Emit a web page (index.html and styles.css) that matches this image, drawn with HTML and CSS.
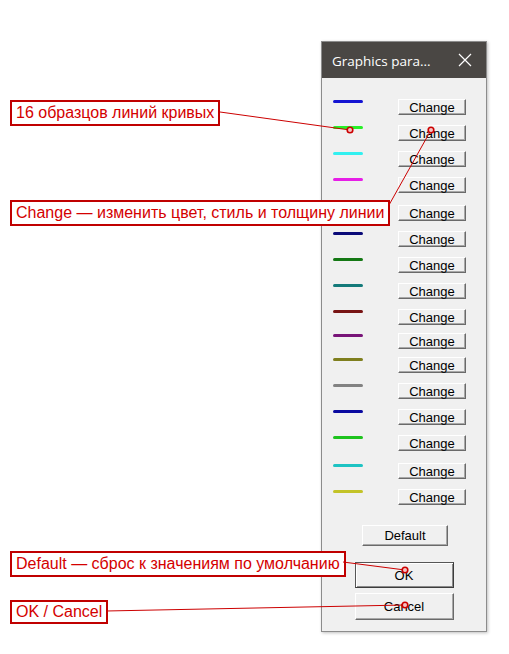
FILE: index.html
```html
<!DOCTYPE html>
<html lang="ru">

<head>
    <meta charset="UTF-8">
    <meta name="viewport" content="width=device-width, initial-scale=1.0">
    <title>Graphics parameters</title>

    <link rel="stylesheet" href="styles.css">
</head>

<body>

    <div class="dialog">
        <div class="titlebar">
            <span class="title">Graphics para...</span>
            <svg class="close" width="14" height="14" viewBox="0 0 14 14">
                <path d="M1 1 L13 13 M13 1 L1 13" stroke="#fff" stroke-width="1.2" fill="none" />
            </svg>
        </div>

        <div class="content">
            <ul class="samples">
                <li class="row"><span class="sample c1"></span><button class="btn change">Change</button></li>
                <li class="row"><span class="sample c2"></span><button class="btn change">Change</button></li>
                <li class="row"><span class="sample c3"></span><button class="btn change">Change</button></li>
                <li class="row"><span class="sample c4"></span><button class="btn change">Change</button></li>
                <li class="row wide"><span class="sample c5"></span><button class="btn change">Change</button></li>
                <li class="row"><span class="sample c6"></span><button class="btn change">Change</button></li>
                <li class="row"><span class="sample c7"></span><button class="btn change">Change</button></li>
                <li class="row"><span class="sample c8"></span><button class="btn change">Change</button></li>
                <li class="row"><span class="sample c9"></span><button class="btn change">Change</button></li>
                <li class="row narrow"><span class="sample c10"></span><button class="btn change">Change</button></li>
                <li class="row narrow"><span class="sample c11"></span><button class="btn change">Change</button></li>
                <li class="row"><span class="sample c12"></span><button class="btn change">Change</button></li>
                <li class="row"><span class="sample c13"></span><button class="btn change">Change</button></li>
                <li class="row"><span class="sample c14"></span><button class="btn change">Change</button></li>
                <li class="row wide"><span class="sample c15"></span><button class="btn change">Change</button></li>
                <li class="row"><span class="sample c16"></span><button class="btn change">Change</button></li>
            </ul>

            <div class="actions">
                <button class="btn default">Default</button>
                <button class="btn ok">OK</button>
                <button class="btn cancel">Cancel</button>
            </div>
        </div>
    </div>

    <!-- annotations on top of the dialog -->
    <div class="note note-samples">16 образцов линий кривых</div>
    <div class="note note-change">Change — изменить цвет, стиль и толщину линии</div>
    <div class="note note-default">Default — сброс к значениям по умолчанию</div>
    <div class="note note-ok">OK / Cancel</div>

    <svg class="leaders" width="509" height="654" viewBox="0 0 509 654">
        <g stroke="#cc0000" stroke-width="1" fill="none">
            <path d="M220 112 L350 130" />
            <path d="M389 205 L431 130" />
            <path d="M343 562 L405 570" />
            <path d="M106 611 L405 605" />
        </g>
        <g stroke="#cc0000" stroke-width="1.6" fill="#f4c4c4">
            <circle cx="350" cy="130" r="2.8" />
            <circle cx="431" cy="130" r="2.8" />
            <circle cx="405" cy="570" r="2.8" />
            <circle cx="405" cy="605" r="2.8" />
        </g>
    </svg>

</body>

</html>
```

FILE: styles.css
```css
html,
body,
ul,
li {
    margin: 0;
    padding: 0;
}

ul {
    list-style: none;
}

body {
    background-color: #fff;
    width: 509px;
    height: 654px;
    position: relative;
    overflow: hidden;
    font-family: "Liberation Sans", Arial, sans-serif;
}

/* window */

.dialog {
    width: 166px;
    margin-left: 321px;
    margin-top: 41px;
    box-sizing: border-box;
    border: 1px solid #8c8c8c;
    background-color: #f0f0f0;
    box-shadow: 1px 1px 3px rgba(0, 0, 0, 0.25);
}

.titlebar {
    height: 36px;
    background-color: #4a4744;
    display: flex;
    align-items: center;
    justify-content: space-between;
    padding: 0 14px 0 10px;
}

.title {
    color: #fff;
    font-family: "Open Sans", "Liberation Sans", sans-serif;
    font-size: 13.5px;
    padding-top: 1px;
}

.close {
    display: block;
}

.content {
    padding: 21px 0 11px 11px;
}

/* line samples */

.samples {
    display: flex;
    flex-direction: column;
}

.row {
    display: flex;
    align-items: flex-start;
    height: 16px;
    margin-top: 10px;
}

.row:first-child {
    margin-top: 0;
}

.row.wide {
    margin-top: 12px;
}

.row.narrow {
    margin-top: 8px;
}

.sample {
    width: 30px;
    height: 3px;
    border-radius: 2px;
    margin-top: 1px;
    margin-right: 35px;
}

.c1 { background-color: #1414d2; }
.c2 { background-color: #28f028; }
.c3 { background-color: #32f0f0; }
.c4 { background-color: #e61ee6; }
.c5 { background-color: #d21414; }
.c6 { background-color: #0a0a78; }
.c7 { background-color: #147814; }
.c8 { background-color: #147a7a; }
.c9 { background-color: #781414; }
.c10 { background-color: #781478; }
.c11 { background-color: #7f7f1e; }
.c12 { background-color: #828282; }
.c13 { background-color: #0a0aa0; }
.c14 { background-color: #1ec31e; }
.c15 { background-color: #1ec3c3; }
.c16 { background-color: #c3c328; }

/* classic 3D push buttons */

.btn {
    box-sizing: border-box;
    margin: 0;
    padding: 0;
    font-family: "Liberation Sans", Arial, sans-serif;
    font-size: 13px;
    color: #000;
    background-color: #f0f0f0;
    border: 1px solid;
    border-color: #fff #6a6a6a #6a6a6a #fff;
    box-shadow: inset -1px -1px 0 #a8a8a8;
    overflow: visible;
}

.change {
    width: 68px;
    height: 16px;
    line-height: 13px;
    padding-top: 1px;
}

.actions {
    display: flex;
    flex-direction: column;
    align-items: center;
    margin-top: 20px;
    padding-right: 11px;
}

.default {
    width: 86px;
    height: 21px;
    margin-left: 2px;
}

.ok {
    width: 99px;
    height: 26px;
    margin-top: 16px;
    border-color: #555 #3c3c3c #3c3c3c #555;
    box-shadow: inset 1px 1px 0 #fff, inset -1px -1px 0 #8a8a8a;
}

.cancel {
    width: 99px;
    height: 27px;
    margin-top: 5px;
}

/* callouts */

.note {
    position: absolute;
    left: 10px;
    box-sizing: border-box;
    height: 26px;
    padding: 0 4px;
    border: 2px solid #c00000;
    background-color: #fff;
    color: #d40000;
    font-size: 16px;
    line-height: 22px;
    white-space: nowrap;
}

.note-samples {
    top: 100px;
}

.note-change {
    top: 200px;
}

.note-default {
    top: 551px;
}

.note-ok {
    top: 600px;
    height: 24px;
    line-height: 20px;
}

.leaders {
    position: absolute;
    left: 0;
    top: 0;
    pointer-events: none;
}
```
